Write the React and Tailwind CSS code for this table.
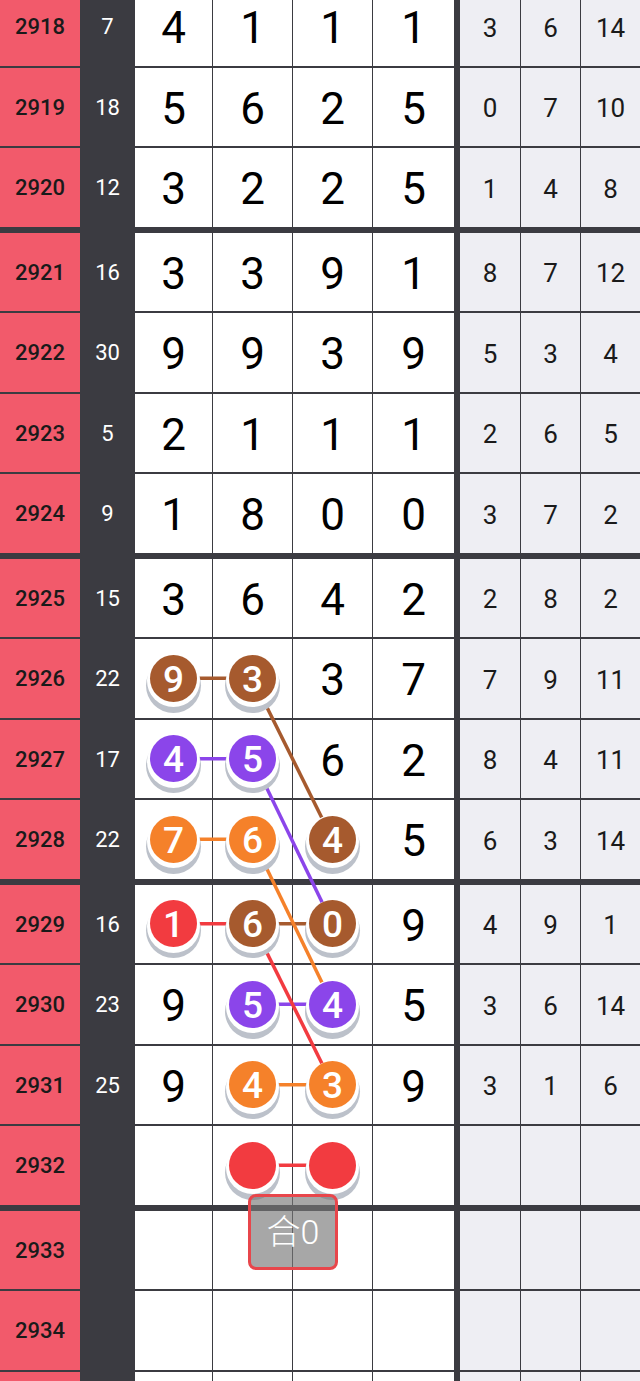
import React from 'react';

const COL = { brown: '#a65a2e', purple: '#8b45ea', orange: '#f5812a', red: '#f23b40' };
const BG = {
  brown: 'bg-[#a65a2e]',
  purple: 'bg-[#8b45ea]',
  orange: 'bg-[#f5812a]',
  red: 'bg-[#f23b40]',
};

const rows = [
  [2918, '7', ['4', '1', '1', '1'], ['3', '6', '14']],
  [2919, '18', ['5', '6', '2', '5'], ['0', '7', '10']],
  [2920, '12', ['3', '2', '2', '5'], ['1', '4', '8']],
  [2921, '16', ['3', '3', '9', '1'], ['8', '7', '12']],
  [2922, '30', ['9', '9', '3', '9'], ['5', '3', '4']],
  [2923, '5', ['2', '1', '1', '1'], ['2', '6', '5']],
  [2924, '9', ['1', '8', '0', '0'], ['3', '7', '2']],
  [2925, '15', ['3', '6', '4', '2'], ['2', '8', '2']],
  [2926, '22', [['9', 'brown'], ['3', 'brown'], '3', '7'], ['7', '9', '11']],
  [2927, '17', [['4', 'purple'], ['5', 'purple'], '6', '2'], ['8', '4', '11']],
  [2928, '22', [['7', 'orange'], ['6', 'orange'], ['4', 'brown'], '5'], ['6', '3', '14']],
  [2929, '16', [['1', 'red'], ['6', 'brown'], ['0', 'brown'], '9'], ['4', '9', '1']],
  [2930, '23', ['9', ['5', 'purple'], ['4', 'purple'], '5'], ['3', '6', '14']],
  [2931, '25', ['9', ['4', 'orange'], ['3', 'orange'], '9'], ['3', '1', '6']],
  [2932, '', ['', ['', 'red'], ['', 'red'], ''], ['', '', '']],
  [2933, '', ['', '', '', ''], ['', '', '']],
  [2934, '', ['', '', '', ''], ['', '', '']],
  [null, '', ['', '', '', ''], ['', '', '']],
];

const CELL_H = 78.5;
const isThick = (n) => n !== null && (n - 2920) % 4 === 0;
const COL_X = [173.5, 252.5, 332.5, 413.5];

const tops = {};
let acc = 0;
rows.forEach((r, i) => {
  tops[r[0] ?? 'x' + i] = acc;
  acc += CELL_H + (isThick(r[0]) ? 6 : 2);
});
const TOTAL_H = acc;
const cy = (n) => tops[n] + CELL_H / 2;

const horiz = [
  [2926, 0, 1, 'brown'],
  [2927, 0, 1, 'purple'],
  [2928, 0, 1, 'orange'],
  [2929, 0, 1, 'red'],
  [2929, 1, 2, 'brown'],
  [2930, 1, 2, 'purple'],
  [2931, 1, 2, 'orange'],
  [2932, 1, 2, 'red'],
];
const diag = [
  [2926, 1, 2928, 2, 'brown'],
  [2927, 1, 2929, 2, 'purple'],
  [2928, 1, 2930, 2, 'orange'],
  [2929, 1, 2931, 2, 'red'],
];

function Ball({ v, c }) {
  return (
    <div className="relative z-10 w-[47px] h-[47px]">
      <div className="absolute left-[-4px] top-[3px] w-[55px] h-[55px] rounded-full bg-[#bcc1ca]" />
      <div className="absolute left-[-3px] top-[-0.5px] w-[53px] h-[53px] rounded-full bg-white" />
      <div
        className={`absolute inset-0 rounded-full ${BG[c]} flex items-center justify-center pt-[2px] text-white text-[37px] font-medium leading-none`}
      >
        {v}
      </div>
    </div>
  );
}

function WCell({ item, className }) {
  const ball = Array.isArray(item);
  return (
    <div
      className={`flex items-center justify-center h-full leading-none text-black ${
        ball ? '' : 'pt-[4px] text-[44px]'
      } ${className}`}
    >
      {ball ? <Ball v={item[0]} c={item[1]} /> : item}
    </div>
  );
}

export default function App() {
  return (
    <div className="w-[640px] h-[1381px] overflow-hidden bg-white font-['Roboto','Noto_Sans_CJK_SC',sans-serif]">
      <div className="relative -mt-[13px]">
        {rows.map(([n, s, w, g], i) => (
          <div
            key={i}
            className={'flex w-[640px] border-[#3b3b41] ' + (isThick(n) ? 'border-b-[6px]' : 'border-b-2')}
          >
            <div className="flex h-[78.5px] w-full">
              <div className="w-[80px] bg-[#f25a6b] flex items-center justify-center pt-[2px] text-[22px] font-medium text-[#1a1a1a] leading-none">
                {n}
              </div>
              <div className="w-[55px] bg-[#3b3b41] flex items-center justify-center pt-[2px] text-[22px] text-white leading-none">
                {s}
              </div>
              <WCell item={w[0]} className="w-[77px]" />
              <WCell item={w[1]} className="w-[80px] border-l border-[#3b3b41]" />
              <WCell item={w[2]} className="w-[80px] border-l border-[#3b3b41]" />
              <WCell item={w[3]} className="w-[82px] border-l border-[#3b3b41]" />
              <div className="w-[6px] bg-[#3b3b41]" />
              <div className="w-[60px] bg-[#eeeef3] flex items-center justify-center pt-[3px] text-[26px] text-[#1a1a1a] leading-none">
                {g[0]}
              </div>
              <div className="w-[60px] bg-[#eeeef3] border-l border-[#3b3b41] flex items-center justify-center pt-[3px] text-[26px] text-[#1a1a1a] leading-none">
                {g[1]}
              </div>
              <div className="w-[60px] bg-[#eeeef3] border-l border-[#3b3b41] flex items-center justify-center pt-[3px] text-[26px] text-[#1a1a1a] leading-none">
                {g[2]}
              </div>
            </div>
          </div>
        ))}

        <svg
          className="absolute left-0 top-0 z-[5] pointer-events-none"
          width="640"
          height={TOTAL_H}
          viewBox={`0 0 640 ${TOTAL_H}`}
        >
          {horiz.map(([n, a, b, c], i) => (
            <line
              key={'h' + i}
              x1={COL_X[a]}
              y1={cy(n)}
              x2={COL_X[b]}
              y2={cy(n)}
              stroke={COL[c]}
              strokeWidth="3.5"
            />
          ))}
          {diag.map(([n1, a, n2, b, c], i) => (
            <line
              key={'d' + i}
              x1={COL_X[a]}
              y1={cy(n1)}
              x2={COL_X[b]}
              y2={cy(n2)}
              stroke={COL[c]}
              strokeWidth="3.5"
            />
          ))}
        </svg>

        <div className="absolute z-20 left-[248px] top-[1207px] w-[90px] h-[76px] rounded-[8px] border-[3px] border-[#e8464b] bg-[rgba(120,120,120,0.65)] flex items-center justify-center text-white text-[34px] leading-none font-light">
          合0
        </div>
      </div>
    </div>
  );
}
